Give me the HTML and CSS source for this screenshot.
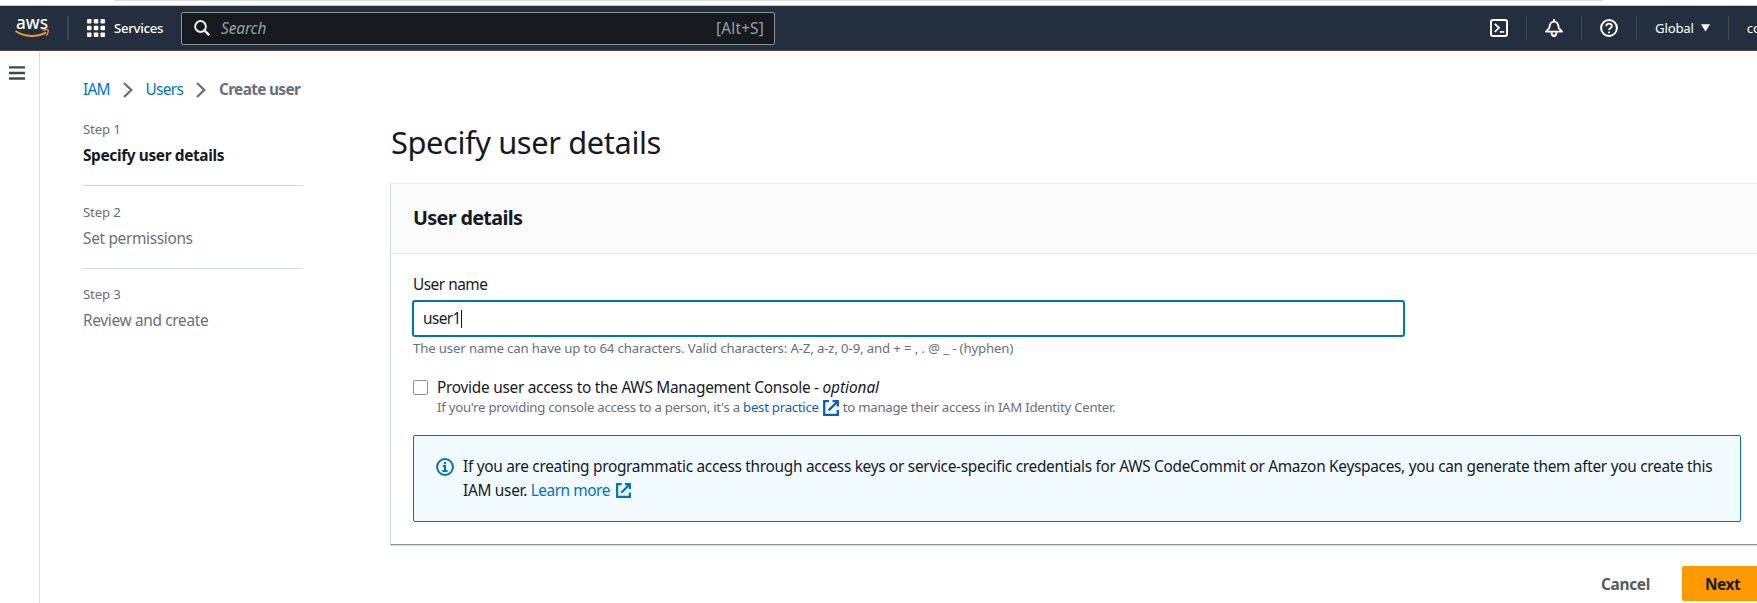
FILE: index.html
```
<!DOCTYPE html>
<html lang="en">
<head>
<meta charset="utf-8">
<title>Create user | IAM | Global</title>
<link rel="stylesheet" href="styles.css">
</head>
<body>
<svg class="defs" width="0" height="0">
  <symbol id="external" viewBox="0 0 16 16">
    <path d="M6 1.200H1.200v13.600h13.600V10M9.500 1.200h5.300v5.300M14.800 1.200 5.600 10.400" fill="none" stroke="currentColor" stroke-width="2.300"/>
  </symbol>
</svg>
<div class="window-edge"><div class="toolbar-edge"></div></div>
<header class="topnav">
  <svg class="logo" width="36" height="24" viewBox="0 0 36 24">
    <text x="1" y="12.500" textLength="32" lengthAdjust="spacingAndGlyphs">aws</text>
    <path d="M.5 15c9.500 6.300 22 6.300 30.600 1.300" fill="none" stroke="#f7981f" stroke-width="2"/>
    <path d="M27.500 14.500c2-.9 5-1.200 5.600-.4.6.8-.4 4-1.900 5.600" fill="none" stroke="#f7981f" stroke-width="1.300"/>
  </svg>
  <span class="rule rule-logo"></span>
  <button class="services">
    <svg width="18" height="18" viewBox="0 0 18 18" fill="#fff">
      <rect width="4.500" height="4.500" rx=".8"/><rect x="6.800" width="4.500" height="4.500" rx=".8"/><rect x="13.500" width="4.500" height="4.500" rx=".8"/>
      <rect y="6.800" width="4.500" height="4.500" rx=".8"/><rect x="6.800" y="6.800" width="4.500" height="4.500" rx=".8"/><rect x="13.500" y="6.800" width="4.500" height="4.500" rx=".8"/>
      <rect y="13.500" width="4.500" height="4.500" rx=".8"/><rect x="6.800" y="13.500" width="4.500" height="4.500" rx=".8"/><rect x="13.500" y="13.500" width="4.500" height="4.500" rx=".8"/>
    </svg>
    <span>Services</span>
  </button>
  <div class="search">
    <svg width="16" height="16" viewBox="0 0 16 16" fill="none" stroke="#eaeded" stroke-width="2">
      <circle cx="6.500" cy="6.500" r="5.400"/><path d="m10.400 10.400 4.900 4.900" stroke-width="2.400"/>
    </svg>
    <span class="placeholder">Search</span>
    <span class="shortcut">[Alt+S]</span>
  </div>
  <div class="tools">
    <svg width="18" height="18" viewBox="0 0 18 18" fill="none" stroke="#fff" stroke-width="2">
      <rect x="1" y="1" width="16" height="16" rx="2"/><path d="m4.800 4.800 4.200 4-4.200 4M9.800 12.800h4.400" stroke-width="1.800"/>
    </svg>
    <span class="rule"></span>
    <svg width="18" height="18" viewBox="0 0 18 18" fill="none" stroke="#fff" stroke-width="1.900">
      <path d="M1 12.600h16l-3.400-3.800C13.400 5 12 2.600 9 2.600S4.600 5 4.400 8.800L1 12.600Z" stroke-linejoin="round"/><path d="M9 0v3M6.500 13.200c0 5 5 5 5 0"/>
    </svg>
    <span class="rule"></span>
    <svg width="18" height="18" viewBox="0 0 18 18" fill="none" stroke="#fff" stroke-width="2">
      <circle cx="9" cy="9" r="7.900"/><path d="M6.200 7.300c0-3.700 5.700-3.500 5.700-.3 0 2-2.900 1.800-2.900 4.100M9 12.400v1.900" stroke-width="1.800"/>
    </svg>
    <span class="rule"></span>
    <button class="region"><span>Global</span><svg width="9" height="8" viewBox="0 0 9 8"><path d="M0 .3h9L4.500 7.500Z" fill="#fff"/></svg></button>
    <span class="rule"></span>
    <span class="account">console</span>
  </div>
</header>

<div class="shell">
  <aside class="drawer">
    <svg width="16" height="14" viewBox="0 0 16 14" fill="none" stroke="#414750" stroke-width="2.300"><path d="M0 1.400h16M0 7h16M0 12.500h16"/></svg>
  </aside>
  <div class="page">
    <nav class="crumbs">
      <a class="crumb-iam">IAM</a>
      <svg width="10" height="16" viewBox="0 0 10 16" fill="none" stroke="#687078" stroke-width="2.300"><path d="m1 1 7.300 7L1 15"/></svg>
      <a class="crumb-users">Users</a>
      <svg width="10" height="16" viewBox="0 0 10 16" fill="none" stroke="#687078" stroke-width="2.300"><path d="m1 1 7.300 7L1 15"/></svg>
      <strong>Create user</strong>
    </nav>
    <div class="wizard">
      <ol class="steps">
        <li><small>Step 1</small><span class="current">Specify user details</span></li>
        <li><small>Step 2</small><span>Set permissions</span></li>
        <li><small>Step 3</small><span>Review and create</span></li>
      </ol>
      <main class="content">
        <h1>Specify user details</h1>
        <section class="card">
          <div class="card-head"><h2>User details</h2></div>
          <div class="card-body">
            <label class="field-label">User name</label>
            <div class="field"><span>user1</span><i class="caret"></i></div>
            <p class="hint">The user name can have up to 64 characters. Valid characters: A-Z, a-z, 0-9, and + = , . @ _ - (hyphen)</p>
            <div class="option">
              <span class="checkbox"></span>
              <div>
                <p class="option-label">Provide user access to the AWS Management Console - <em>optional</em></p>
                <p class="option-note">If you're providing console access to a person, it's a <a>best practice</a><svg class="ext-note" width="16" height="16"><use href="#external"/></svg>to manage their access in IAM Identity Center.</p>
              </div>
            </div>
            <div class="alert">
              <svg class="info" width="18" height="18" viewBox="0 0 18 18" fill="none" stroke="#0073bb" stroke-width="2">
                <circle cx="9" cy="9" r="7.900"/><path d="M9 4v2.200M6.800 8H9v5M6.400 13h5.200"/>
              </svg>
              <p>If you are creating programmatic access through access keys or service-specific credentials for AWS CodeCommit or Amazon Keyspaces, you can generate them after you create this<br><span class="iam-user">IAM user. </span><a>Learn more</a><svg class="ext-alert" width="15" height="15"><use href="#external"/></svg></p>
            </div>
          </div>
        </section>
        <div class="actions"><button class="cancel">Cancel</button><button class="next">Next</button></div>
      </main>
    </div>
  </div>
</div>
</body>
</html>
```
FILE: styles.css
```
* { box-sizing: border-box; }
html, body { height: 100%; margin: 0; overflow: hidden; }
body {
  display: flex;
  flex-direction: column;
  background: #fff;
  color: #16191f;
  font: 15.4px/22px "Noto Sans", sans-serif;
}
h1, h2, p, ol { margin: 0; padding: 0; }
button { border: 0; padding: 0; background: none; font: inherit; color: inherit; }
svg { flex: none; display: block; }
.defs { position: absolute; }

.window-edge { flex: none; height: 6px; border-bottom: 1px solid #c4c9ca; }
.toolbar-edge { width: 1489px; height: 1px; margin-left: 114px; background: #dedede; }

.topnav {
  flex: none;
  display: flex;
  align-items: center;
  height: 45px;
  background: #232f3e;
  border-bottom: 1px solid #414750;
  color: #fff;
  font-size: 13.2px;
  white-space: nowrap;
}
.topnav > * { flex: none; }
.logo { margin: 0 0 0 15px; overflow: visible; }
.logo text { font: 500 18px "Noto Sans", sans-serif; fill: #fff; }
.rule { flex: none; width: 1px; height: 24px; background: #414750; }
.rule-logo { width: 2px; margin: 0 18px 0 16px; }
.services { display: flex; align-items: center; gap: 9px; width: 94px; }
.services span { padding-bottom: 1px; font-weight: 500; letter-spacing: -.29px; }
.search {
  display: flex;
  align-items: center;
  width: 594px;
  height: 33px;
  padding: 0 10px 0 12px;
  background: #16191f;
  border: 1px solid #879596;
  border-radius: 2px;
  font-size: 15.4px;
  color: #95a5a6;
}
.placeholder { margin-left: 11px; padding-top: 2px; font-style: italic; letter-spacing: -.1px; }
.shortcut { margin-left: auto; padding-top: 2px; letter-spacing: .18px; }
.tools { display: flex; align-items: center; margin-left: 715px; }
.tools .rule { margin: 0 18px; }
.region { display: flex; align-items: center; gap: 7px; letter-spacing: -.18px; }
.account { letter-spacing: -.25px; }

.shell { flex: 1; display: flex; min-height: 0; }
.drawer { flex: none; width: 40px; margin-top: 1px; padding: 14px 0 0 9px; border-right: 1px solid #d5dbdb; }
.page { flex: none; width: 1800px; padding: 28px 0 0 43px; white-space: nowrap; }

a { color: #0073bb; }
.crumbs { display: flex; align-items: center; height: 22px; }
.crumbs svg { margin-left: 13px; margin-right: 13px; }
.crumb-iam { width: 26.500px; letter-spacing: -.8px; }
.crumb-users { width: 37.500px; letter-spacing: -.65px; }
.crumbs strong { color: #687078; letter-spacing: -.67px; }

.wizard { display: flex; gap: 87px; }
.steps { width: 220px; padding-top: 18px; list-style: none; color: #687078; }
.steps li { display: flex; flex-direction: column; gap: 6px; padding-bottom: 18px; }
.steps li + li { padding-top: 16px; border-top: 1px solid #d5dbdb; }
.steps li:last-child { padding-top: 15px; }
.steps small { font-size: 13.2px; line-height: 20px; letter-spacing: -.15px; }
.steps span { letter-spacing: -.32px; }
.steps .current { color: #16191f; font-weight: 700; letter-spacing: -.36px; }

.content { width: 1400px; padding-top: 23px; }
h1 { padding-left: 1px; font-size: 30.8px; line-height: 36px; font-weight: 400; letter-spacing: -.38px; }
.card {
  height: 362px;
  margin-top: 23px;
  border: 1px solid #eaeded;
  border-left-color: #d5dbdb;
  border-bottom: 1px solid #879596;
  box-shadow: 0 1px 0 #d5dbdb;
}
.card-head { height: 70px; padding: 22px; background: #fafafa; border-bottom: 1px solid #eaeded; }
h2 { font-size: 19.8px; line-height: 24px; letter-spacing: -.66px; }
.card-body { padding: 20px 21px; }
.field-label { display: block; padding-left: 1px; letter-spacing: -.5px; }
.field {
  display: flex;
  align-items: center;
  width: 993px;
  height: 37px;
  margin-top: 4px;
  padding-left: 9px;
  border: 2px solid #0073bb;
  border-radius: 3px;
  letter-spacing: -.6px;
}
.caret { width: 1px; height: 18px; background: #16191f; }
.hint { padding-left: 1px; margin-top: 1px; font-size: 13.2px; line-height: 20px; letter-spacing: -.13px; color: #687078; }
.option { display: flex; gap: 9px; margin-top: 19px; }
.checkbox { width: 15px; height: 15px; margin: 3px 0 0 1px; border: 1px solid #879596; border-radius: 2px; }
.option-label { padding-top: 1px; line-height: 20px; letter-spacing: -.27px; }
.option-label em { letter-spacing: -.05px; }
.option-note { margin-top: -1px; font-size: 13.2px; line-height: 20px; letter-spacing: -.25px; color: #687078; }
.option-note a { color: #0a5fc0; }
.option-note svg { display: inline-block; vertical-align: -4px; margin: 0 4px; color: #0a5fc0; }
.alert {
  display: flex;
  gap: 9px;
  width: 1328px;
  height: 87px;
  margin: 18px 0 0 1px;
  padding: 19px 22px;
  background: #f1faff;
  border: 1px solid #0073bb;
  border-radius: 2px;
}
.info { margin-top: 3px; }
.alert p { line-height: 24px; letter-spacing: -.291px; }
.alert a { letter-spacing: -.45px; }
.ext-alert { display: inline-block; vertical-align: -2px; margin-left: 6px; color: #0073bb; }

.actions { display: flex; align-items: center; margin: 21px 0 0 1211px; font-weight: 700; }
.cancel { width: 81px; padding-top: 2px; text-align: left; color: #545b64; letter-spacing: -.3px; }
.next { width: 100px; height: 35px; padding: 2px 0 0 23px; text-align: left; background: #ff9900; border-radius: 2px; letter-spacing: -.45px; }
```
